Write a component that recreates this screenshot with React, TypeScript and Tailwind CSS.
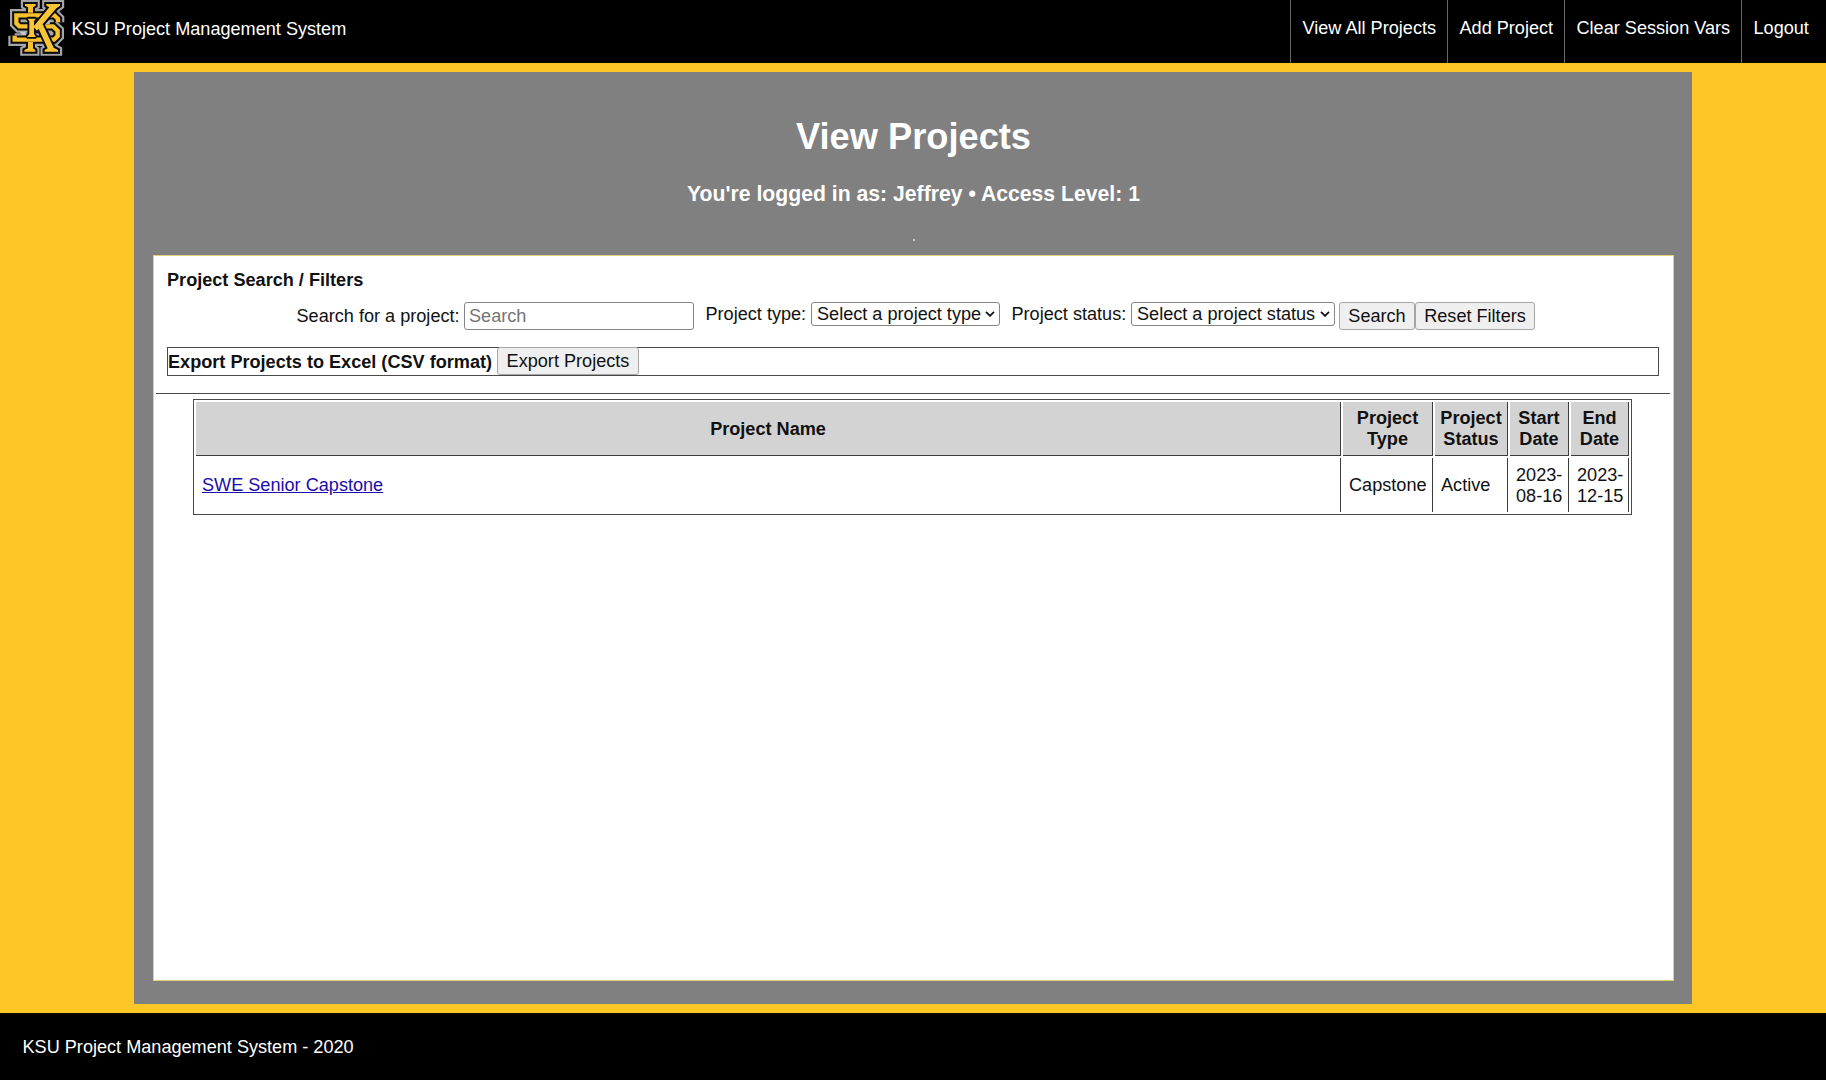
const S_PATH = "M173 67 V57 L162 46 H48 V70 L57 79 H158 L172 92 V108 L161 119 H43 V107";
const STEMS = "M74 12 H106 V17 L98 22 V38 H83 V22 L74 17 Z M83 126 H98 V145 L105 150 V155 H72 V150 L83 145 Z";
const ARMS = "M138 12 H179 V17 L168 25 L110 92 L99 80 L147 22 L138 17 Z M110 76 L124 66 L160 143 L173 150 V155 H133 V150 L142 145 Z";
const CENTER = "M82 56 H106 L101 64 V102 L107 111 H80 L87 102 V64 Z";

function Logo() {
  return (
    <svg className="h-[57px] w-[60px] shrink-0" viewBox="20 0 180 171" fill="none" strokeLinejoin="miter" strokeMiterlimit="2">
      <g stroke="#a3a5a8">
        <path d={S_PATH} strokeWidth="38" />
        <path d={STEMS} strokeWidth="25" />
        <path d={ARMS} strokeWidth="25" />
      </g>
      <g stroke="#0c0b08" fill="#0c0b08">
        <path d={S_PATH} strokeWidth="25" fill="none" />
        <path d={STEMS} strokeWidth="12" />
        <path d={ARMS} strokeWidth="12" />
      </g>
      <path d="M134 71 L149 61 L148 72 Z M58 95 H76 V105 H66 Z" fill="#c9cacc" />
      <path d={S_PATH} stroke="#f6c02f" strokeWidth="13" />
      <path d={STEMS} fill="#f6c02f" />
      <g stroke="#0c0b08" strokeWidth="11" fill="#0c0b08">
        <path d={CENTER} />
        <path d={ARMS} />
      </g>
      <path d={CENTER} fill="#fac637" />
      <path d={ARMS} fill="#fac637" />
    </svg>
  );
}

const navItems = [
  { label: "View All Projects", width: "w-[157px]" },
  { label: "Add Project", width: "w-[117px]" },
  { label: "Clear Session Vars", width: "w-[177px]" },
  { label: "Logout", width: "w-[85px]" },
];

function Select({ label, width }: { label: string; width: string }) {
  return (
    <button className={`flex h-[24px] items-center justify-between rounded-[3px] border border-[#858585] bg-white pr-[4px] pl-[5px] leading-[22px] whitespace-nowrap ${width}`}>
      {label}
      <svg className="h-[6px] w-[10px] shrink-0" viewBox="0 0 10 6" fill="none" stroke="#111" strokeWidth="1.8">
        <path d="M1 0.8 L5 4.8 L9 0.8" />
      </svg>
    </button>
  );
}

const buttonBase = "h-[28px] shrink-0 rounded-[3px] border border-[#a5a5a5] bg-[#efefef] text-center leading-[26px] whitespace-nowrap";
const th = "border-r border-b border-[#3c3c3c] bg-[#d3d3d3] px-0 pt-px pb-0 text-center font-bold";
const td = "border-r border-[#3c3c3c] pt-px pr-0 pb-0 pl-[6px]";

export default function App() {
  return (
    <div className="flex h-[1080px] w-[1826px] flex-col overflow-hidden bg-[#ffc627] font-['Liberation_Sans',Arial,sans-serif] text-[18.13px] leading-[21px] text-[#111]">
      <header className="flex h-[63px] shrink-0 justify-between bg-black text-white">
        <div className="flex pl-[7px]">
          <Logo />
          <span className="pl-[4.5px] leading-[59px]">KSU Project Management System</span>
        </div>
        <nav className="flex">
          {navItems.map((item) => (
            <a key={item.label} className={`border-l border-[#666] pl-[11.5px] leading-[57px] whitespace-nowrap ${item.width}`}>
              {item.label}
            </a>
          ))}
        </nav>
      </header>

      <main className="mx-auto mt-[9px] flex h-[932px] w-[1558px] shrink-0 flex-col bg-[#808080] pr-[18px] pl-[19px]">
        <div className="flex h-[183px] shrink-0 flex-col items-center text-white">
          <h1 className="mt-[44px] text-[36.25px] leading-[42px] font-bold">View Projects</h1>
          <h3 className="mt-[24px] text-[21.2px] leading-[24px] font-bold">You're logged in as: Jeffrey • Access Level: 1</h3>
          <hr className="mt-[33px] h-[2px] w-[2px] border-0 bg-[#c8c8c8]" />
        </div>

        <section className="h-[726px] border border-[#e3cf7c] bg-white pr-[3px] pl-[2px]">
          <div className="h-[138px] border-b border-[#4a4a4a] px-[11px] pt-[14px]">
            <h4 className="font-bold">Project Search / Filters</h4>
            <div className="mt-[11px] flex items-start pl-[129.5px]">
              <label className="w-[167.5px] leading-[29px] whitespace-nowrap">Search for a project:</label>
              <input
                className="h-[28px] w-[230px] rounded-[3px] border border-[#858585] bg-white px-[4px] placeholder:text-[#757575]"
                placeholder="Search"
              />
              <label className="ml-[11.5px] w-[105.5px] leading-[25px] whitespace-nowrap">Project type:</label>
              <Select label="Select a project type" width="w-[189px]" />
              <label className="ml-[11.5px] w-[119.5px] leading-[25px] whitespace-nowrap">Project status:</label>
              <Select label="Select a project status" width="w-[204px]" />
              <button className={`ml-[4px] w-[76px] ${buttonBase}`}>Search</button>
              <button className={`w-[120px] ${buttonBase}`}>Reset Filters</button>
            </div>
            <div className="mt-[16px] flex h-[29px] border border-[#4a4a4a]">
              <span className="w-[329px] leading-[29px] font-bold whitespace-nowrap">Export Projects to Excel (CSV format)</span>
              <button className={`-mt-px w-[142px] ${buttonBase}`}>Export Projects</button>
            </div>
          </div>

          <table className="mt-[5px] ml-[37px] h-[116px] w-[1439px] table-fixed border-separate border-spacing-[2px] border border-[#4a4a4a]">
            <colgroup>
              <col className="w-[1145px]" />
              <col className="w-[90px]" />
              <col className="w-[73px]" />
              <col className="w-[59px]" />
              <col className="w-[58px]" />
            </colgroup>
            <thead>
              <tr className="h-[54px]">
                <th className={th}>Project Name</th>
                <th className={th}>Project<br />Type</th>
                <th className={th}>Project<br />Status</th>
                <th className={th}>Start<br />Date</th>
                <th className={th}>End<br />Date</th>
              </tr>
            </thead>
            <tbody>
              <tr>
                <td className={td}>
                  <a className="text-[#1a0dab] underline">SWE Senior Capstone</a>
                </td>
                <td className={td}>Capstone</td>
                <td className={td}>Active</td>
                <td className={td}>2023-<br />08-16</td>
                <td className={td}>2023-<br />12-15</td>
              </tr>
            </tbody>
          </table>
        </section>
      </main>

      <footer className="mt-[9px] grow bg-black pl-[22.5px] leading-[69px] text-white">KSU Project Management System - 2020</footer>
    </div>
  );
}
